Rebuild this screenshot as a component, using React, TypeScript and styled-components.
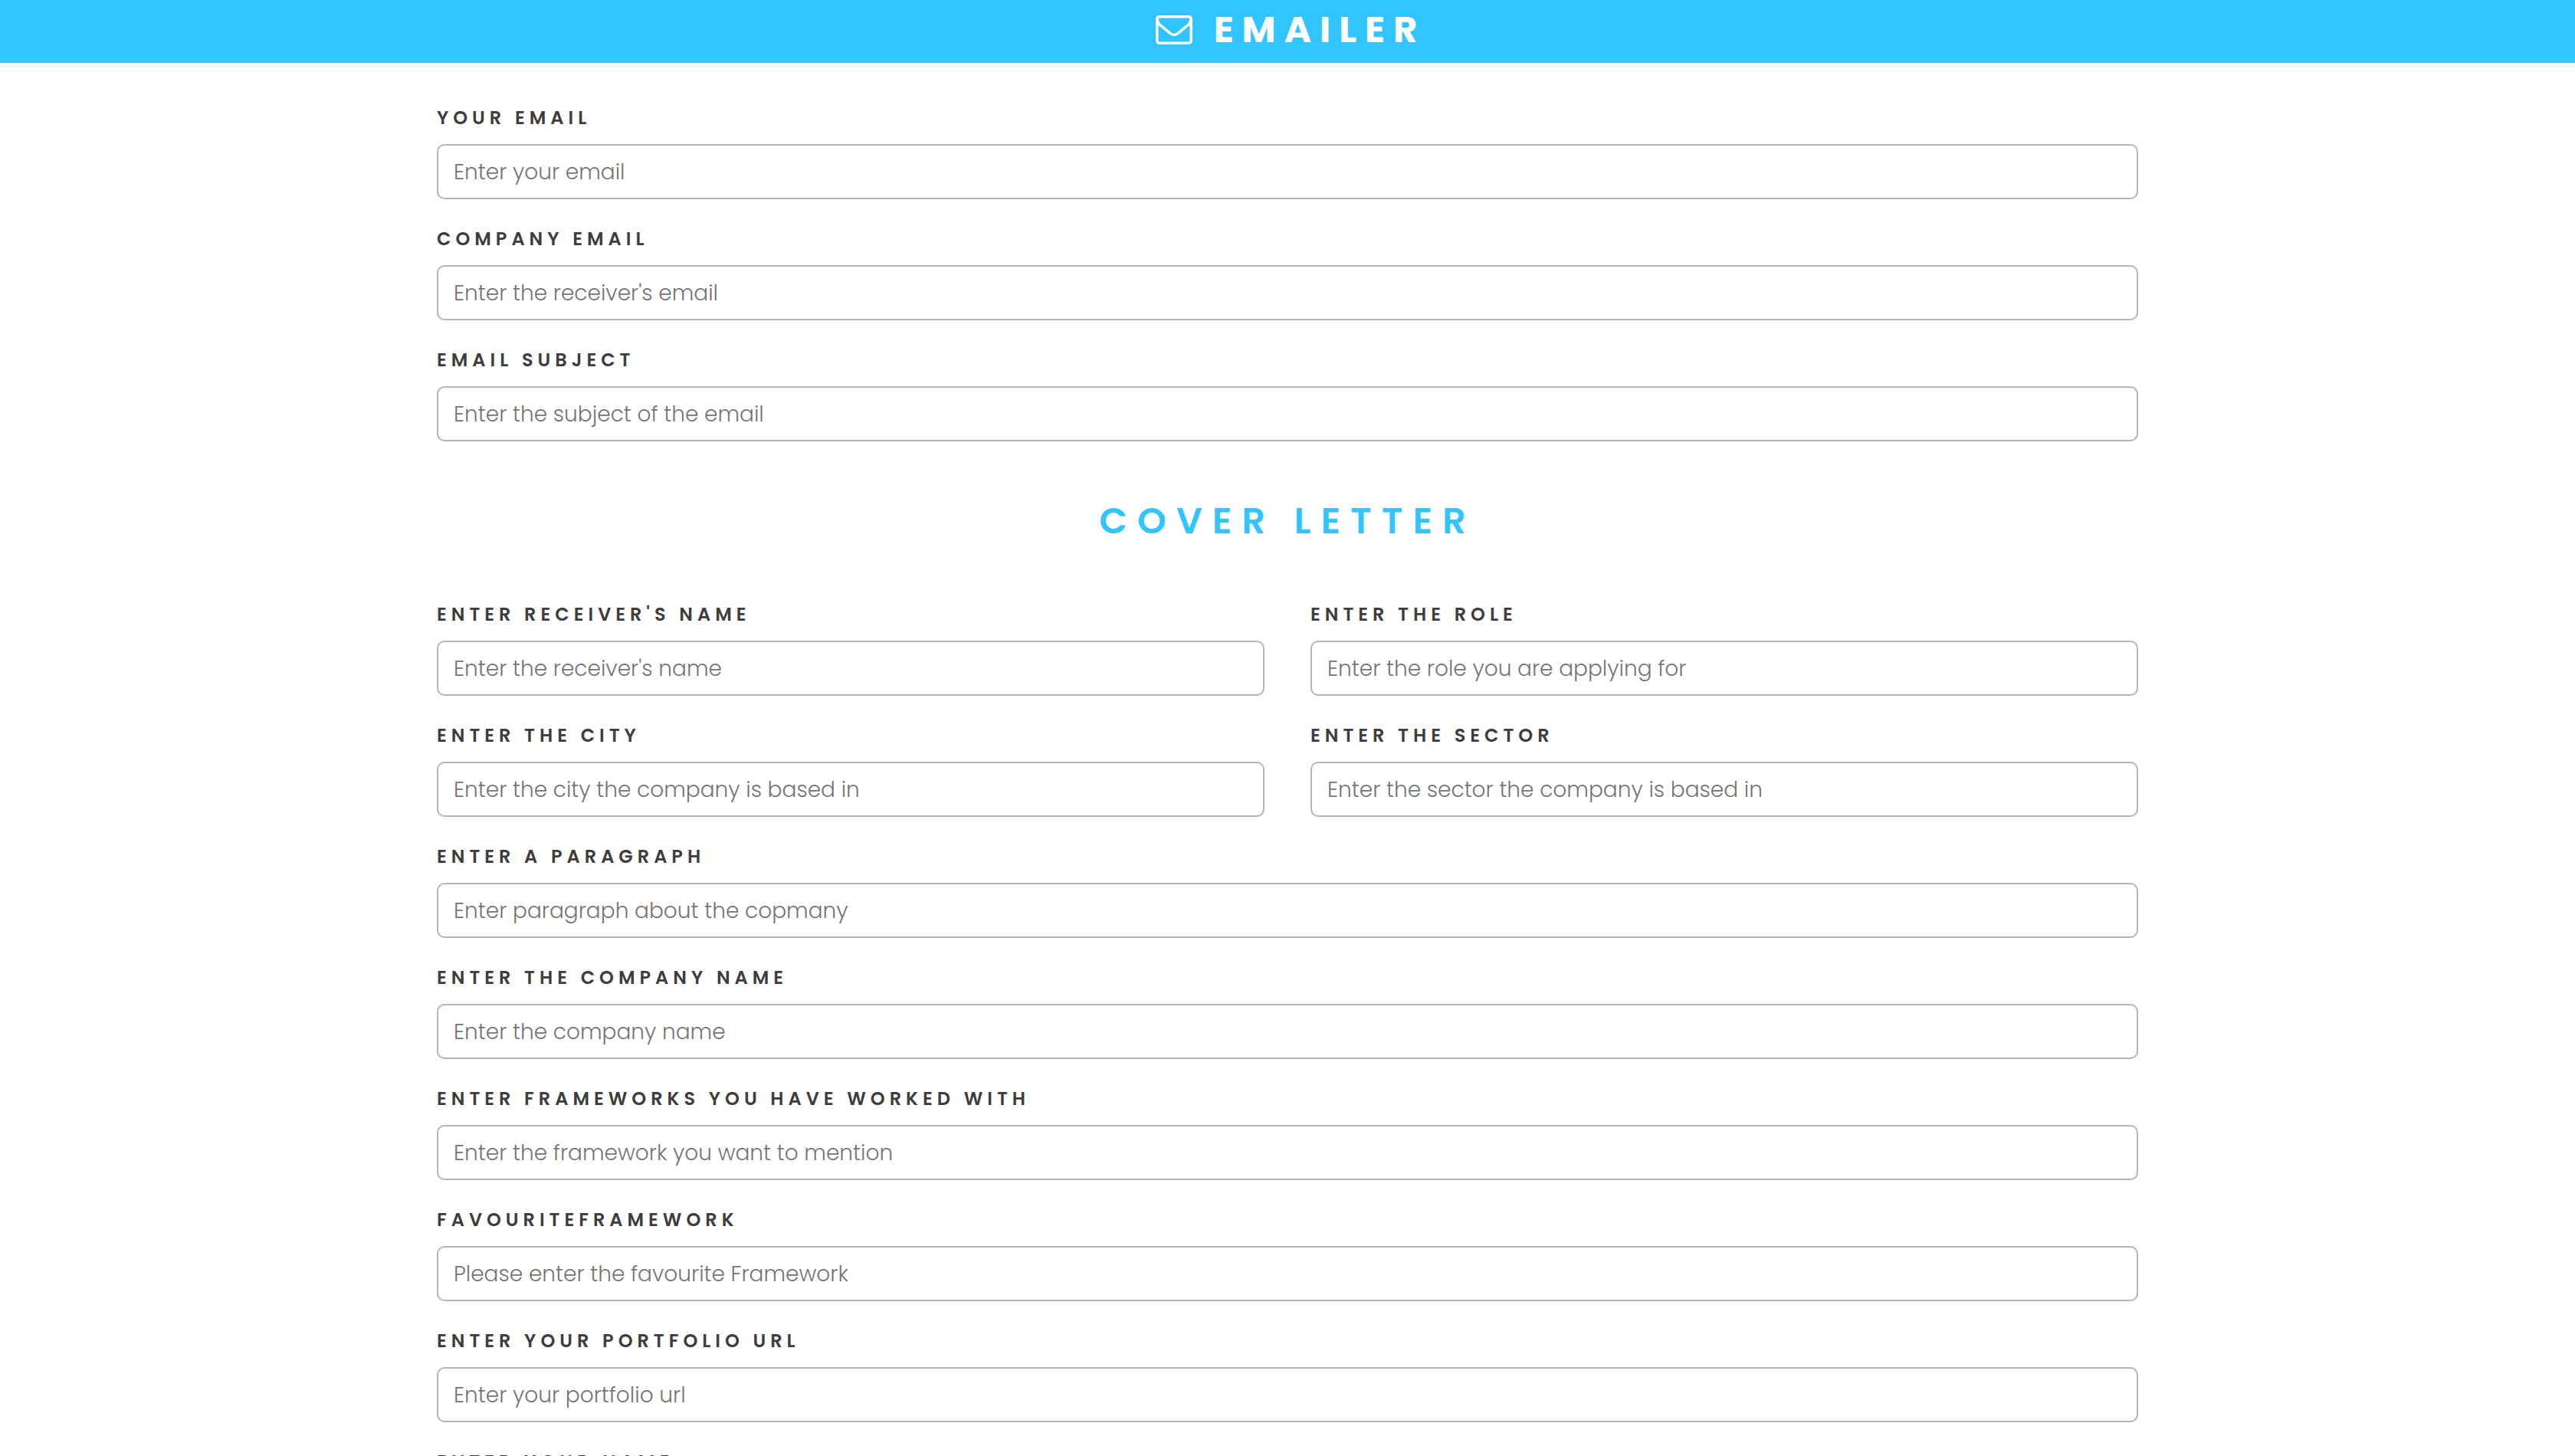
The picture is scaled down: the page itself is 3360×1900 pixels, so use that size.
import React from "react";
import styled, { createGlobalStyle } from "styled-components";

const GlobalStyle = createGlobalStyle`
  * { box-sizing: border-box; }
  body {
    margin: 0;
    background: #fff;
    color: #3d3d3d;
    font-family: Poppins, Inter, "Liberation Sans", sans-serif;
  }
`;

const Header = styled.header`
  display: flex;
  align-items: center;
  justify-content: center;
  gap: 28px;
  height: 82px;
  padding-bottom: 4px;
  background: #31c4ff;
  color: #fff;
`;

const Brand = styled.h1`
  margin: 0 -8px 0 0;
  font-size: 48px;
  line-height: 72px;
  font-weight: 700;
  letter-spacing: 11px;
  text-transform: uppercase;
`;

const Mark = styled.svg`
  width: 48px;
  height: 38px;
  fill: none;
  stroke: currentColor;
  stroke-width: 3.5;
`;

const Form = styled.form`
  display: grid;
  grid-template-columns: 1fr 1fr;
  column-gap: 60px;
  row-gap: 34px;
  width: 100%;
  max-width: 2300px;
  margin: 0 auto;
  padding: 54px 40px;
`;

const Field = styled.div<{ $half?: boolean }>`
  display: flex;
  flex-direction: column;
  gap: 16px;
  grid-column: ${(p) => (p.$half ? "auto" : "1 / -1")};
`;

const Label = styled.label`
  font-size: 24px;
  line-height: 36px;
  font-weight: 600;
  letter-spacing: 6px;
  text-transform: uppercase;
`;

const Input = styled.input`
  width: 100%;
  height: 72px;
  padding: 2px 20px 0;
  border: 2px solid #b5b5b5;
  border-radius: 10px;
  background: #fff;
  color: #3d3d3d;
  font-family: inherit;
  font-size: 28px;
  font-weight: 300;
  &::placeholder { color: #757575; opacity: 1; }
`;

const SectionTitle = styled.h2`
  grid-column: 1 / -1;
  margin: 34px 0;
  font-size: 48px;
  line-height: 72px;
  font-weight: 600;
  letter-spacing: 13px;
  text-align: center;
  text-transform: uppercase;
  color: #31c4ff;
`;

type FieldSpec = { id: string; label: string; hint: string; type?: string; half?: boolean };

const addressFields: FieldSpec[] = [
  { id: "from", label: "Your email", hint: "Enter your email", type: "email" },
  { id: "to", label: "Company email", hint: "Enter the receiver's email", type: "email" },
  { id: "subject", label: "Email subject", hint: "Enter the subject of the email" },
];

const letterFields: FieldSpec[] = [
  { id: "receiver", label: "Enter receiver's name", hint: "Enter the receiver's name", half: true },
  { id: "role", label: "Enter the role", hint: "Enter the role you are applying for", half: true },
  { id: "city", label: "Enter the city", hint: "Enter the city the company is based in", half: true },
  { id: "sector", label: "Enter the sector", hint: "Enter the sector the company is based in", half: true },
  { id: "paragraph", label: "Enter a paragraph", hint: "Enter paragraph about the copmany" },
  { id: "company", label: "Enter the company name", hint: "Enter the company name" },
  { id: "frameworks", label: "Enter frameworks you have worked with", hint: "Enter the framework you want to mention" },
  { id: "favourite", label: "FavouriteFramework", hint: "Please enter the favourite Framework" },
  { id: "portfolio", label: "Enter your portfolio url", hint: "Enter your portfolio url", type: "url" },
  { id: "name", label: "Enter your name", hint: "Enter your name" },
];

const renderField = (f: FieldSpec) => (
  <Field key={f.id} $half={f.half}>
    <Label htmlFor={f.id}>{f.label}</Label>
    <Input id={f.id} name={f.id} type={f.type ?? "text"} placeholder={f.hint} />
  </Field>
);

export default function App() {
  return (
    <>
      <GlobalStyle />
      <Header>
        <Mark viewBox="0 0 48 38" aria-hidden="true">
          <rect x="1.75" y="1.75" width="44.5" height="34.5" rx="3" />
          <path d="M2 4C2 8 3 10 5 12L19 23.500Q24 27.500 29 23.500L43 12C45 10 46 8 46 4" />
        </Mark>
        <Brand>Emailer</Brand>
      </Header>
      <Form>
        {addressFields.map(renderField)}
        <SectionTitle>Cover letter</SectionTitle>
        {letterFields.map(renderField)}
      </Form>
    </>
  );
}
